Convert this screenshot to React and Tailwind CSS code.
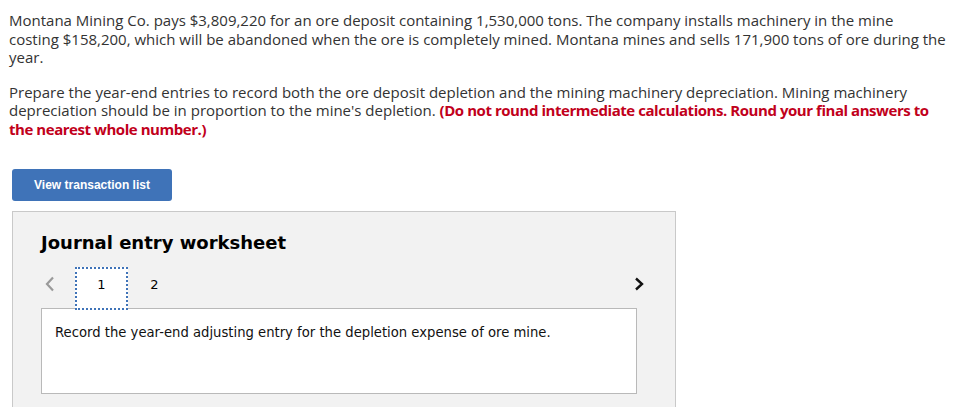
import React from 'react';

const ChevronLeft = () => (
  <svg width="10" height="16" viewBox="0 0 10 16" className="block">
    <polyline points="8,1.5 2,8 8,14.5" fill="none" stroke="#9a9a9a" strokeWidth="2.2" />
  </svg>
);

const ChevronRight = () => (
  <svg width="10" height="14" viewBox="0 0 10 14" className="block">
    <polyline points="2,1.5 8,7 2,12.5" fill="none" stroke="#111" strokeWidth="2.4" />
  </svg>
);

export default function App() {
  return (
    <div className="w-[962px] h-[407px] bg-white overflow-hidden">
      {/* Problem text */}
      <div className="pl-[9px] pt-[11px] text-[15px] leading-[18.5px] text-[#333] font-['Open_Sans',sans-serif] whitespace-nowrap">
        <p>
          Montana Mining Co. pays $3,809,220 for an ore deposit containing 1,530,000 tons. The company installs machinery in the mine
          <br />
          costing $158,200, which will be abandoned when the ore is completely mined. Montana mines and sells 171,900 tons of ore during the
          <br />
          year.
        </p>
        <p className="mt-[16px]">
          Prepare the year-end entries to record both the ore deposit depletion and the mining machinery depreciation. Mining machinery
          <br />
          depreciation should be in proportion to the mine's depletion.{' '}
          <b className="text-[#c1001b] font-bold tracking-[-0.45px]">
            (Do not round intermediate calculations. Round your final answers to
            <br />
            the nearest whole number.)
          </b>
        </p>
      </div>

      <button className="ml-[12px] mt-[31px] w-[160px] h-[32px] rounded-[3px] bg-[#3f73b8] text-white text-[12px] font-bold font-['Liberation_Sans',sans-serif] block">
        View transaction list
      </button>

      {/* Worksheet panel */}
      <div className="ml-[12px] mt-[10px] w-[664px] h-[300px] border border-[#c9c9c9] bg-[#f2f2f2] pl-[28px] pt-[21px]">
        <h2 className="text-[18px] leading-[20px] font-bold text-black font-['DejaVu_Sans',sans-serif]">
          Journal entry worksheet
        </h2>

        <div className="mt-[14px] flex items-start h-[43px] w-[603px]">
          <div className="w-[34px] pl-[4px] pt-[9px]">
            <ChevronLeft />
          </div>
          <div className="w-[53px] h-[43px] pt-[8px] bg-white border-2 border-dotted border-[#3f73b8] flex justify-center text-[13px] leading-[16px] text-black font-['DejaVu_Sans',sans-serif] relative z-10">
            1
          </div>
          <div className="w-[53px] pt-[10px] flex justify-center text-[13px] leading-[16px] text-black font-['DejaVu_Sans',sans-serif]">
            2
          </div>
          <div className="ml-auto pt-[10px]">
            <ChevronRight />
          </div>
        </div>

        <div className="-mt-[2px] w-[596px] h-[86px] bg-white border border-[#b9b9b9] pl-[13px] pt-[14px] text-[13.2px] text-[#111] font-['DejaVu_Sans',sans-serif]">
          Record the year-end adjusting entry for the depletion expense of ore mine.
        </div>
      </div>
    </div>
  );
}
